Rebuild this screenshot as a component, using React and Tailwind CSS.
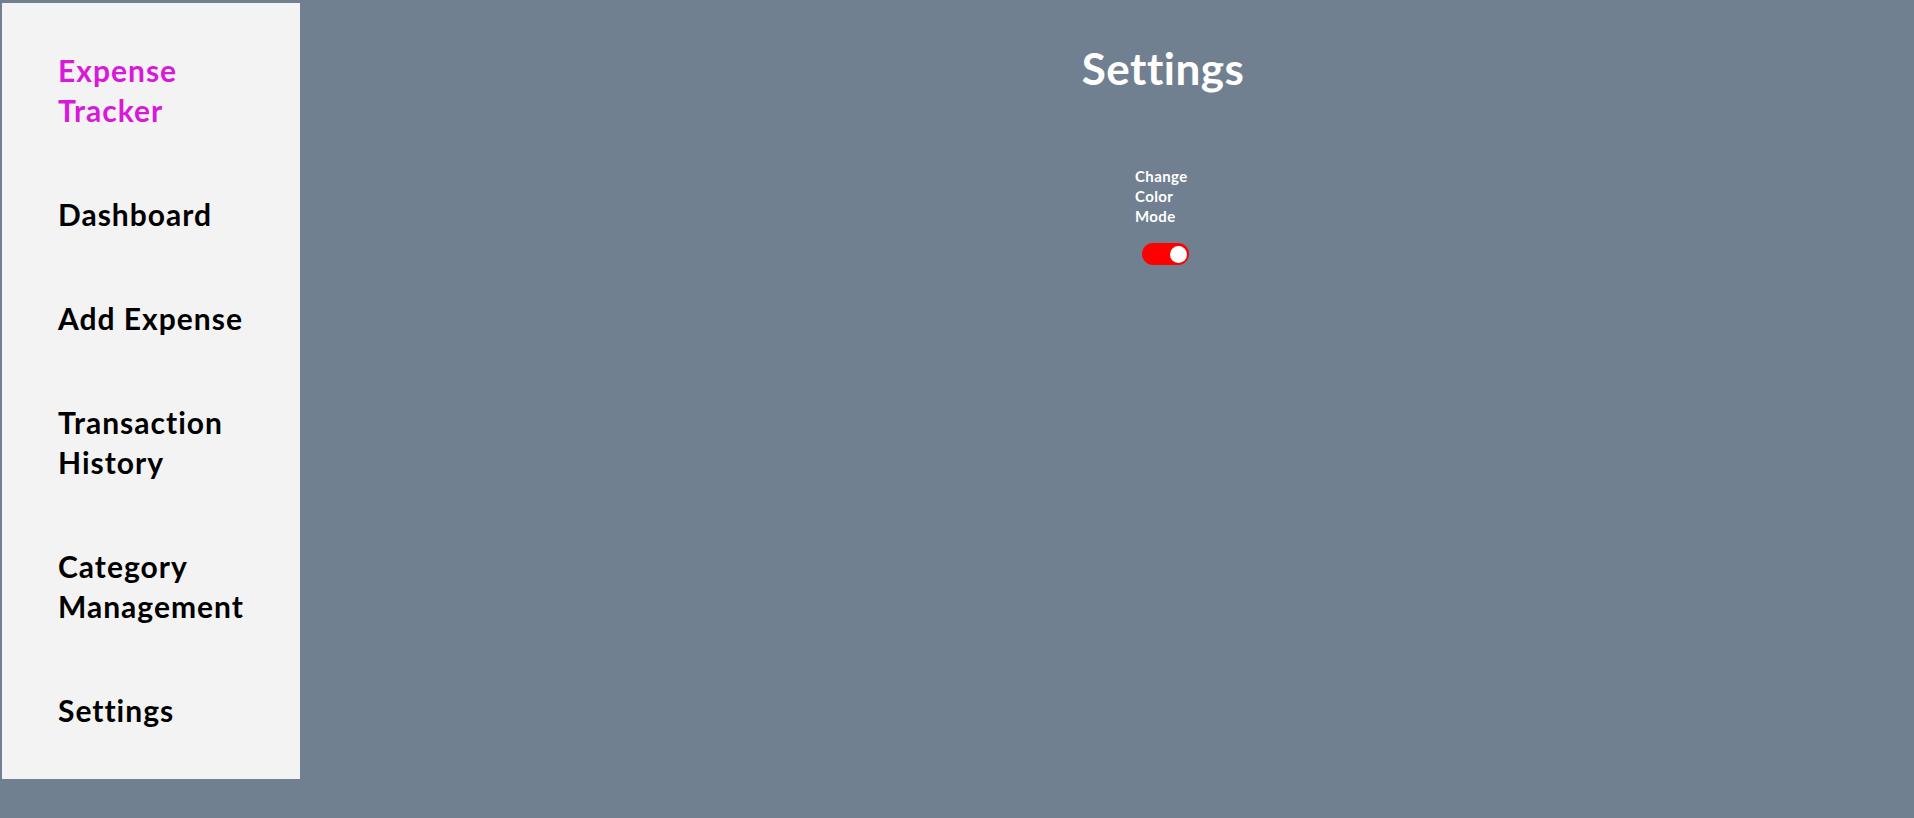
import React, { useState } from 'react';

// --- Sidebar ---

const Sidebar = () => {
    const links = ["Dashboard", "Add Expense", "Transaction History", "Category Management", "Settings"];

    return (
        <aside className="ml-[2px] mt-[3px] h-[776px] w-[298px] shrink-0 bg-[#f3f3f3] pl-[56px] pr-4 pt-[47px]">
            <div className="flex flex-col gap-16">
                <h2 className="w-[140px] text-[30px] font-bold leading-[40px] tracking-[1px] text-[#d81ad8]">Expense Tracker</h2>
                {links.map(link => (
                    <a key={link} href="#" className="w-[220px] text-[30px] font-bold leading-[40px] tracking-[1px] text-black">
                        {link}
                    </a>
                ))}
            </div>
        </aside>
    );
};

// --- Toggle switch ---

const Toggle = () => {
    const [on, setOn] = useState(true);
    return (
        <button
            onClick={() => setOn(!on)}
            className={`flex h-[22px] w-[47px] items-center rounded-full px-[2px] ${on ? 'justify-end bg-[#ff0000]' : 'justify-start bg-gray-300'}`}
        >
            <span className="block h-[17px] w-[17px] rounded-full bg-white"></span>
        </button>
    );
};

// --- Main Settings Page ---
export default function App() {
    return (
        <div className="flex h-[818px] w-full bg-[#708090] font-['Lato','Liberation_Sans',sans-serif]">
            <Sidebar />
            <main className="flex flex-1 flex-col items-center pl-[112px] pt-[42px]">
                <h1 className="text-[44px] font-bold leading-[52px] tracking-[0.5px] text-white">Settings</h1>
                <div className="mt-[72px] flex w-[56px] flex-col items-start">
                    <p className="text-[15px] font-bold leading-[20px] tracking-[0.4px] text-white">Change Color Mode</p>
                    <div className="ml-[7px] mt-[17px]">
                        <Toggle />
                    </div>
                </div>
            </main>
        </div>
    );
}
